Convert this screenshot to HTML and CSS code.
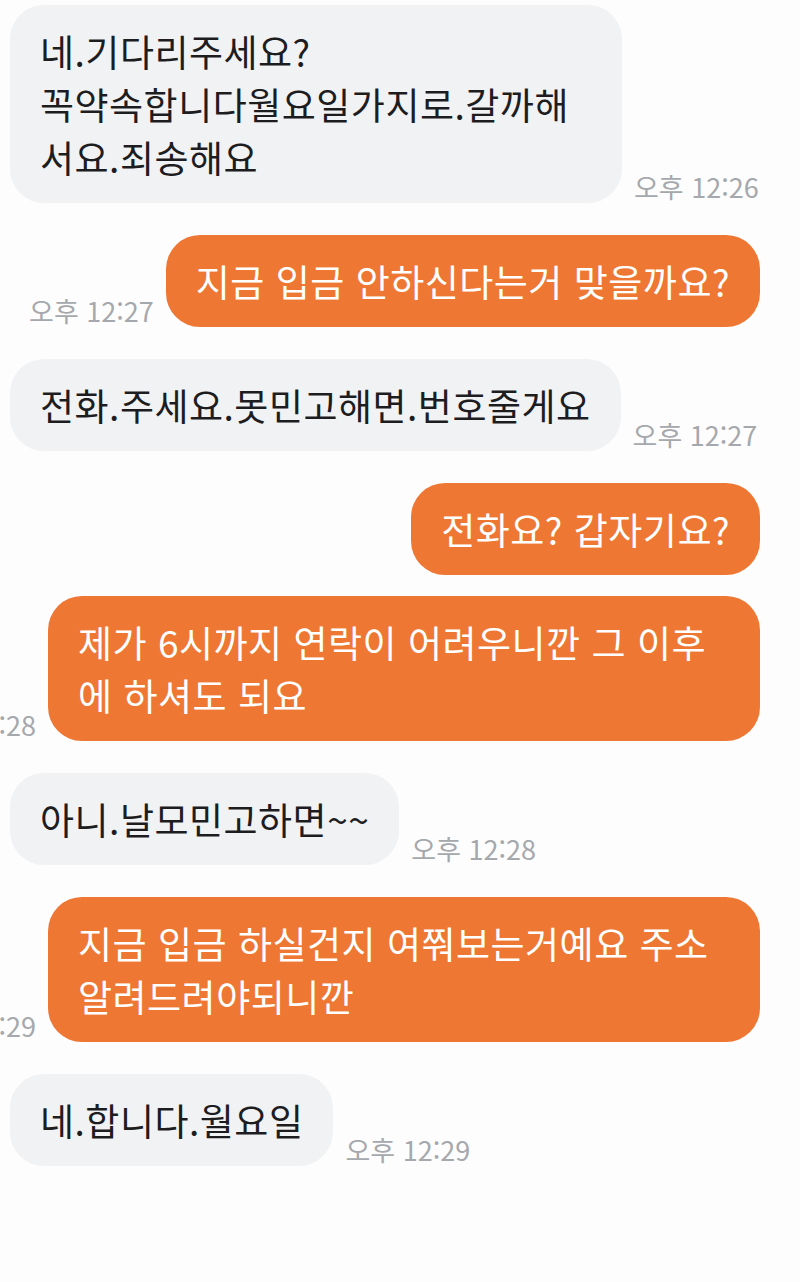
FILE: index.html
```html
<!DOCTYPE html>
<html lang="ko">
<head>
<meta charset="UTF-8" />
<meta name="viewport" content="width=device-width, initial-scale=1" />
<title>채팅</title>
<link rel="stylesheet" href="styles.css">
</head>
<body>
<main class="chat">
  <div class="row in">
    <div class="bubble full">네.기다리주세요?<br>꼭약속합니다월요일가지로.갈까해<br>서요.죄송해요</div>
    <span class="time">오후 12:26</span>
  </div>
  <div class="row out">
    <span class="time">오후 12:27</span>
    <div class="bubble">지금 입금 안하신다는거 맞을까요?</div>
  </div>
  <div class="row in">
    <div class="bubble">전화.주세요.못민고해면.번호줄게요</div>
    <span class="time">오후 12:27</span>
  </div>
  <div class="row out">
    <div class="bubble">전화요? 갑자기요?</div>
  </div>
  <div class="row out">
    <span class="time">오후 12:28</span>
    <div class="bubble full">제가 6시까지 연락이 어려우니깐 그 이후<br>에 하셔도 되요</div>
  </div>
  <div class="row in">
    <div class="bubble">아니.날모민고하면~~</div>
    <span class="time">오후 12:28</span>
  </div>
  <div class="row out">
    <span class="time">오후 12:29</span>
    <div class="bubble full">지금 입금 하실건지 여쭤보는거예요 주소<br>알려드려야되니깐</div>
  </div>
  <div class="row in">
    <div class="bubble">네.합니다.월요일</div>
    <span class="time">오후 12:29</span>
  </div>
</main>
</body>
</html>
```

FILE: styles.css
```css
* {
  box-sizing: border-box;
}
body {
  margin: 0;
  background: #fdfdfd;
  font-family: "Noto Sans CJK KR", "Noto Sans", sans-serif;
  overflow: hidden;
}
.chat {
  display: flex;
  flex-direction: column;
  gap: 32px;
  padding: 5px 40px 0 10px;
}
.row {
  display: flex;
  align-items: flex-end;
  gap: 12px;
}
.row.out {
  justify-content: flex-end;
}
.row.out + .row.out {
  margin-top: -11px;
}
.bubble {
  flex-shrink: 0;
  padding: 20px 30px 19px;
  border-radius: 34px;
  font-size: 37px;
  line-height: 53px;
  letter-spacing: 0.5px;
}
.in .bubble {
  max-width: 612px;
  background: #f1f2f4;
  color: #1d1d1f;
}
.out .bubble {
  max-width: 712px;
  background: #ee7733;
  color: #fff;
}
.in .bubble.full {
  width: 612px;
}
.out .bubble.full {
  width: 712px;
}
.time {
  flex-shrink: 0;
  margin-bottom: 1px;
  font-size: 27px;
  line-height: 30px;
  color: #a5a8ac;
  white-space: nowrap;
}
```
